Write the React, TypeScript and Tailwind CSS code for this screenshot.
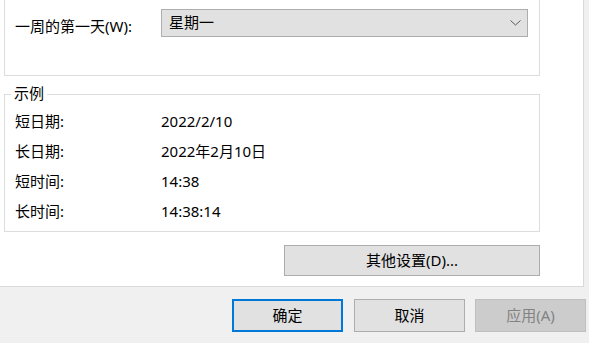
import React from 'react';

const font = { fontFamily: '"Noto Sans", "Noto Sans CJK SC", sans-serif' };

const samples: [string, string][] = [
  ['短日期:', '2022/2/10'],
  ['长日期:', '2022年2月10日'],
  ['短时间:', '14:38'],
  ['长时间:', '14:38:14'],
];

export default function App() {
  return (
    <div
      className="w-[589px] h-[343px] overflow-hidden bg-[#f0f0f0] text-[15px] text-black"
      style={font}
    >
      <div className="w-[584px] h-[287px] bg-white border-r border-b border-[#d9d9d9] flex flex-col">
        {/* 第一组 */}
        <div className="ml-[4px] w-[536px] h-[76px] border-l border-r border-b border-[#dcdcdc] flex items-start">
          <div className="ml-[10px] mt-[16px] w-[146px] leading-[20px]">一周的第一天(W):</div>
          <div className="mt-[9px] w-[367px] h-[28px] bg-[#e1e1e1] border border-[#adadad] flex items-center justify-between pl-[7px] pr-[6px]">
            <span className="leading-[20px] -mt-[3px]">星期一</span>
            <svg width="11" height="6" viewBox="0 0 11 6" className="mb-[1px]">
              <path d="M0.5 0.5 L5.5 5 L10.5 0.5" fill="none" stroke="#5a5a5a" strokeWidth="1" />
            </svg>
          </div>
        </div>

        {/* 示例 */}
        <div className="relative ml-[4px] mt-[18px] w-[536px] h-[138px] border border-[#dcdcdc] pt-[11px] pl-[10px]">
          <span className="absolute left-[6px] -top-[12px] bg-white px-[3px] leading-[20px]">示例</span>
          {samples.map(([k, v]) => (
            <div key={k} className="flex h-[30px] items-center">
              <span className="w-[146px]">{k}</span>
              <span>{v}</span>
            </div>
          ))}
        </div>

        <button className="ml-[284px] mt-[13px] w-[256px] h-[31px] bg-[#e1e1e1] border border-[#adadad] leading-none">
          其他设置(D)...
        </button>
      </div>

      <div className="flex mt-[12px]">
        <button className="ml-[232px] w-[111px] h-[33px] bg-[#e1e1e1] border-2 border-[#0078d7] leading-none">
          确定
        </button>
        <button className="ml-[11px] w-[111px] h-[33px] bg-[#e1e1e1] border border-[#adadad] leading-none">
          取消
        </button>
        <button className="ml-[10px] w-[111px] h-[33px] bg-[#cccccc] border border-[#bfbfbf] text-[#838383] leading-none">
          应用(A)
        </button>
      </div>
    </div>
  );
}
